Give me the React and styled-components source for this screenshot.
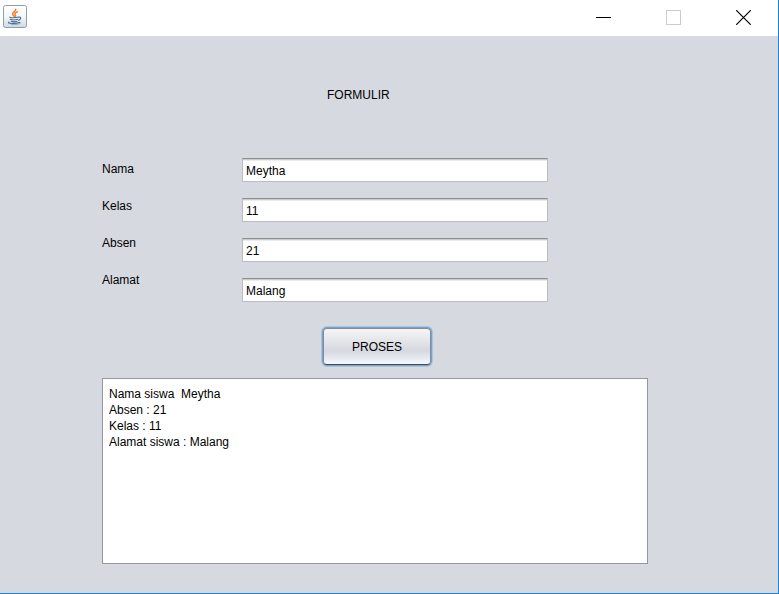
import React, { useState } from "react";
import styled, { createGlobalStyle } from "styled-components";

const GlobalStyle = createGlobalStyle`
  * { box-sizing: border-box; }
  body { margin: 0; background: #d6d9e0; }
  body, button, input, textarea {
    font-family: "Liberation Sans", Arial, sans-serif;
    font-size: 12px;
    line-height: 16px;
    color: #000;
  }
`;

const Window = styled.div`
  display: flex;
  flex-direction: column;
  min-height: 100vh;
  background: #d6d9e0;
  border-right: 1px solid #1883d7;
  border-bottom: 1px solid #1883d7;
`;

const TitleBar = styled.header`
  display: flex;
  align-items: center;
  justify-content: space-between;
  height: 36px;
  padding: 0 0 2px 3px;
  background: #fff;
`;

const WindowControls = styled.div`
  display: flex;
`;

const ControlButton = styled.button`
  display: flex;
  align-items: center;
  justify-content: center;
  width: 70px;
  height: 34px;
  padding: 0;
  border: 0;
  background: transparent;
`;

const Form = styled.form`
  display: flex;
  flex-direction: column;
  flex: 1;
  padding: 51px 130px 29px 102px;
`;

const Heading = styled.h1`
  margin: 0 0 55px;
  padding-left: 225px;
  font-size: 12px;
  line-height: 16px;
  font-weight: 400;
`;

const Fields = styled.div`
  display: grid;
  grid-template-columns: 140px 1fr;
  padding-right: 100px;
`;

const Labels = styled.div`
  display: flex;
  flex-direction: column;
  align-items: flex-start;
  gap: 21px;
  padding-top: 3px;
`;

const Label = styled.label`
  line-height: 16px;
`;

const Inputs = styled.div`
  display: flex;
  flex-direction: column;
  gap: 16px;
`;

const TextInput = styled.input`
  width: 100%;
  height: 24px;
  padding: 2px 3px 0;
  border: 1px solid #bcbcbe;
  border-top-color: #8d8e8f;
  border-radius: 0;
  background: #fff;
  box-shadow: inset 0 1px #c9cacb, inset 0 2px #ececec;
  outline: none;
`;

const SubmitButton = styled.button`
  align-self: flex-start;
  width: 108px;
  height: 37px;
  margin: 26px 0 13px 221px;
  padding: 0;
  border: 1px solid #868b94;
  border-bottom-color: #484c53;
  border-radius: 4px;
  background: linear-gradient(#f5f5f6 0%, #e4e5e9 35%, #d5d8df 62%, #dfe2e9 75%, #f5f8ff 100%);
  box-shadow: 0 0 0 1px #73a4d1, 0 0 0 2px #a9c5df;
  outline: none;
`;

const Output = styled.textarea`
  flex: 1;
  width: 100%;
  min-height: 100px;
  padding: 7px 6px;
  border: 1px solid #9297a1;
  border-radius: 0;
  background: #fff;
  resize: none;
  outline: none;
`;

const fields = [
  { name: "nama", label: "Nama" },
  { name: "kelas", label: "Kelas" },
  { name: "absen", label: "Absen" },
  { name: "alamat", label: "Alamat" },
];

const describe = (v) =>
  `Nama siswa  ${v.nama}\nAbsen : ${v.absen}\nKelas : ${v.kelas}\nAlamat siswa : ${v.alamat}`;

function JavaIcon() {
  return (
    <svg width="24" height="24" viewBox="0 0 24 24" fill="none" aria-hidden="true">
      <defs>
        <linearGradient id="tile" x1="0" y1="0" x2="0" y2="1">
          <stop offset="0" stopColor="#fff" />
          <stop offset="0.5" stopColor="#f6f7f8" />
          <stop offset="1" stopColor="#cfd9e1" />
        </linearGradient>
      </defs>
      <rect x="0.5" y="0.5" width="23" height="22" rx="2" fill="url(#tile)" stroke="#8ba0ad" />
      <path d="M12.7 4.2c.9 1.8-3.3 2.9-3.1 4.8.2 1.1 1.2 1.6 1.7 2.6M14.5 6.8c-2.4.9-3.1 1.9-2.2 3 .5.7.4 1.1-.3 1.8" stroke="#ee8434" strokeWidth="1.5" strokeLinecap="round" />
      <path d="M7 12c-1 .9 5.500 1 8.300.1M7.200 14.300c1.800.7 5.300.7 7.500 0M8.200 16.300c1.500.6 4 .6 5.700 0M15.800 12.200c2.500-.5 2.600 2-.2 3M6 17.100c-3.300 1.500 7.500 2 10.800.2" stroke="#456f91" strokeWidth="1.1" strokeLinecap="round" />
      <path d="M8.500 19.600c3.500.2 7-.1 9-1.200" stroke="#8ca5b8" strokeWidth="0.9" strokeLinecap="round" />
    </svg>
  );
}

export default function App() {
  const [values, setValues] = useState({ nama: "Meytha", kelas: "11", absen: "21", alamat: "Malang" });
  const [output, setOutput] = useState(describe(values));

  const submit = (event) => {
    event.preventDefault();
    setOutput(describe(values));
  };

  return (
    <>
      <GlobalStyle />
      <Window>
        <TitleBar>
          <JavaIcon />
          <WindowControls>
            <ControlButton type="button" aria-label="Minimize">
              <svg width="15" height="15" viewBox="0 0 15 15"><path d="M0 7.5h15" stroke="#000" /></svg>
            </ControlButton>
            <ControlButton type="button" aria-label="Maximize" disabled>
              <svg width="15" height="15" viewBox="0 0 15 15"><rect x="0.5" y="0.5" width="14" height="14" fill="none" stroke="#ccc" /></svg>
            </ControlButton>
            <ControlButton type="button" aria-label="Close">
              <svg width="15" height="15" viewBox="0 0 15 15"><path d="M.2.2l14.6 14.6M14.8.2L.2 14.8" stroke="#000" strokeWidth="1.2" /></svg>
            </ControlButton>
          </WindowControls>
        </TitleBar>
        <Form onSubmit={submit}>
          <Heading>FORMULIR</Heading>
          <Fields>
            <Labels>
              {fields.map(({ name, label }) => (
                <Label key={name} htmlFor={name}>{label}</Label>
              ))}
            </Labels>
            <Inputs>
              {fields.map(({ name }) => (
                <TextInput
                  key={name}
                  id={name}
                  type="text"
                  value={values[name]}
                  onChange={(e) => setValues({ ...values, [name]: e.target.value })}
                />
              ))}
            </Inputs>
          </Fields>
          <SubmitButton type="submit">PROSES</SubmitButton>
          <Output aria-label="Hasil" value={output} onChange={(e) => setOutput(e.target.value)} />
        </Form>
      </Window>
    </>
  );
}
